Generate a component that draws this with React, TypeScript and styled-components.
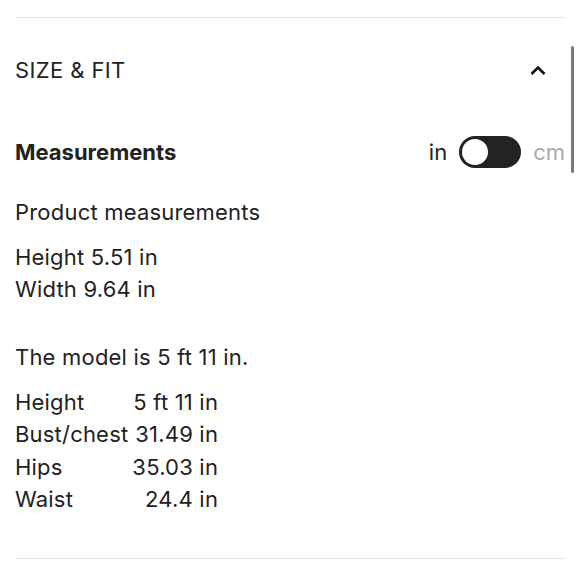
import React, { useState } from 'react';
import styled, { createGlobalStyle } from 'styled-components';

const Global = createGlobalStyle`
  html, body {
    margin: 0;
    padding: 0;
    background: #fff;
  }
  body {
    font-family: Inter, Roboto, "Liberation Sans", sans-serif;
    color: #222;
  }
`;

const Page = styled.div`
  position: relative;
  width: 580px;
  height: 580px;
  padding: 17px 15px 0 15px;
  box-sizing: border-box;
  overflow: hidden;
`;

const Section = styled.section`
  border-top: 1px solid #e4e4e4;
  border-bottom: 1px solid #e4e4e4;
  height: 542px;
  box-sizing: border-box;
`;

const Header = styled.div`
  display: flex;
  align-items: center;
  justify-content: space-between;
  height: 104px;
  padding-right: 19px;
  font-size: 22px;
  letter-spacing: 0.4px;
`;

const SubHeader = styled.div`
  display: flex;
  align-items: center;
  justify-content: space-between;
  height: 32px;
  margin-top: 14px;
`;

const Strong = styled.h3`
  margin: 0;
  font-size: 22px;
  font-weight: 700;
`;

const UnitSwitch = styled.div`
  display: flex;
  align-items: center;
  gap: 12px;
  font-size: 22px;
`;

const Unit = styled.span<{ $active: boolean }>`
  color: ${p => (p.$active ? '#222' : '#aaa')};
`;

const Track = styled.button`
  position: relative;
  width: 62px;
  height: 32px;
  border: none;
  border-radius: 16px;
  background: #222;
  padding: 0;
  cursor: pointer;
`;

const Knob = styled.span<{ $on: boolean }>`
  position: absolute;
  top: 3px;
  left: ${p => (p.$on ? '33px' : '3px')};
  width: 26px;
  height: 26px;
  border-radius: 50%;
  background: #fff;
`;

const Body = styled.div`
  font-size: 22px;
  line-height: 32px;
  letter-spacing: 0.2px;
`;

const Para = styled.p<{ $top: number }>`
  margin: ${p => p.$top}px 0 0;
`;

const Table = styled.table`
  margin-top: 13px;
  border-collapse: collapse;
  td {
    padding: 0;
    line-height: 32.3px;
  }
  td + td {
    text-align: right;
    padding-left: 4px;
  }
`;

const Scrollbar = styled.div`
  position: absolute;
  right: 6px;
  top: 46px;
  width: 3px;
  height: 127px;
  border-radius: 2px;
  background: #7a7a7a;
`;

const model = [
  ['Height', '5 ft 11 in'],
  ['Bust/chest', '31.49 in'],
  ['Hips', '35.03 in'],
  ['Waist', '24.4 in'],
];

export default function App() {
  const [cm, setCm] = useState(false);
  return (
    <Page>
      <Global />
      <Section>
        <Header>
          <span>SIZE &amp; FIT</span>
          <svg width="16" height="10" viewBox="0 0 16 10">
            <path d="M1.5 9 L8 2.5 L14.5 9" fill="none" stroke="#111" strokeWidth="2.6" />
          </svg>
        </Header>
        <SubHeader>
          <Strong>Measurements</Strong>
          <UnitSwitch>
            <Unit $active={!cm}>in</Unit>
            <Track onClick={() => setCm(!cm)}>
              <Knob $on={cm} />
            </Track>
            <Unit $active={cm}>cm</Unit>
          </UnitSwitch>
        </SubHeader>
        <Body>
          <Para $top={28}>Product measurements</Para>
          <Para $top={13}>
            Height 5.51 in
            <br />
            Width 9.64 in
          </Para>
          <Para $top={36}>The model is 5 ft 11 in.</Para>
          <Table>
            <tbody>
              {model.map(([k, v]) => (
                <tr key={k}>
                  <td>{k}</td>
                  <td>{v}</td>
                </tr>
              ))}
            </tbody>
          </Table>
        </Body>
      </Section>
      <Scrollbar />
    </Page>
  );
}
